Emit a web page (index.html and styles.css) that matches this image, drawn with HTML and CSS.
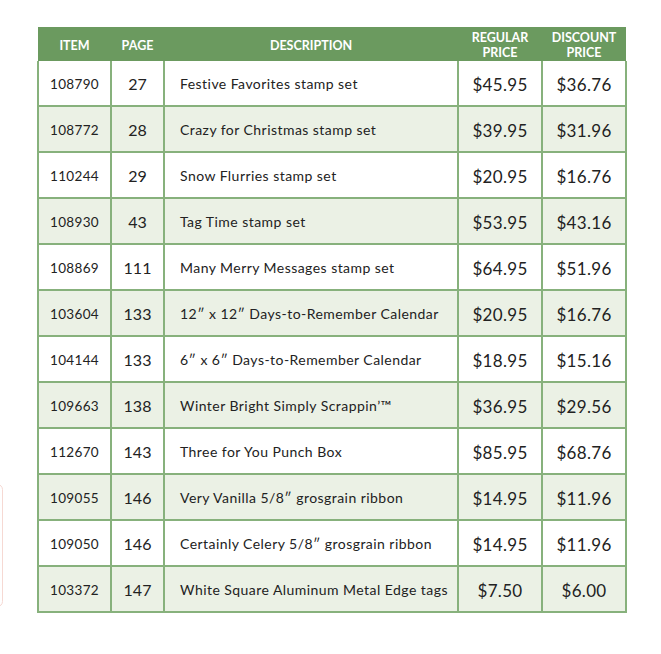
FILE: index.html
```html
<!DOCTYPE html>
<html>
<head>
<meta charset="utf-8">
<link rel="stylesheet" href="styles.css">
</head>
<body>
<div class="edge"></div>
<div class="wrap">
<table class="price-table">
  <colgroup>
    <col class="c-item"><col class="c-page"><col class="c-desc"><col class="c-price"><col class="c-price">
  </colgroup>
  <thead>
    <tr><th>ITEM</th><th>PAGE</th><th>DESCRIPTION</th><th>REGULAR<br>PRICE</th><th>DISCOUNT<br>PRICE</th></tr>
  </thead>
  <tbody>
    <tr><td class="item">108790</td><td class="page">27</td><td class="desc">Festive Favorites stamp set</td><td class="price">$45.95</td><td class="price">$36.76</td></tr>
    <tr class="alt"><td class="item">108772</td><td class="page">28</td><td class="desc">Crazy for Christmas stamp set</td><td class="price">$39.95</td><td class="price">$31.96</td></tr>
    <tr><td class="item">110244</td><td class="page">29</td><td class="desc">Snow Flurries stamp set</td><td class="price">$20.95</td><td class="price">$16.76</td></tr>
    <tr class="alt"><td class="item">108930</td><td class="page">43</td><td class="desc">Tag Time stamp set</td><td class="price">$53.95</td><td class="price">$43.16</td></tr>
    <tr><td class="item">108869</td><td class="page">111</td><td class="desc">Many Merry Messages stamp set</td><td class="price">$64.95</td><td class="price">$51.96</td></tr>
    <tr class="alt"><td class="item">103604</td><td class="page">133</td><td class="desc">12″ x 12″ Days-to-Remember Calendar</td><td class="price">$20.95</td><td class="price">$16.76</td></tr>
    <tr><td class="item">104144</td><td class="page">133</td><td class="desc">6″ x 6″ Days-to-Remember Calendar</td><td class="price">$18.95</td><td class="price">$15.16</td></tr>
    <tr class="alt"><td class="item">109663</td><td class="page">138</td><td class="desc">Winter Bright Simply Scrappin’™</td><td class="price">$36.95</td><td class="price">$29.56</td></tr>
    <tr><td class="item">112670</td><td class="page">143</td><td class="desc">Three for You Punch Box</td><td class="price">$85.95</td><td class="price">$68.76</td></tr>
    <tr class="alt"><td class="item">109055</td><td class="page">146</td><td class="desc">Very Vanilla 5/8″ grosgrain ribbon</td><td class="price">$14.95</td><td class="price">$11.96</td></tr>
    <tr><td class="item">109050</td><td class="page">146</td><td class="desc">Certainly Celery 5/8″ grosgrain ribbon</td><td class="price">$14.95</td><td class="price">$11.96</td></tr>
    <tr class="alt"><td class="item">103372</td><td class="page">147</td><td class="desc">White Square Aluminum Metal Edge tags</td><td class="price">$7.50</td><td class="price">$6.00</td></tr>
  </tbody>
</table>
</div>
</body>
</html>
```
FILE: styles.css
```css
html, body {
  margin: 0;
  padding: 0;
  background: #ffffff;
}
body {
  font-family: Lato, "Noto Sans", sans-serif;
  color: #222;
  position: relative;
  width: 661px;
  height: 654px;
  overflow: hidden;
}
.edge {
  position: absolute;
  left: -8px;
  top: 484px;
  width: 9px;
  height: 121px;
  border: 1px solid #f6d9d3;
  border-radius: 6px;
}
.wrap {
  padding: 27px 0 0 37px;
}
.price-table {
  border-collapse: collapse;
  table-layout: fixed;
  width: 588px;
}
.c-item { width: 73px; }
.c-page { width: 53px; }
.c-desc { width: 294px; }
.c-price { width: 84px; }
.price-table th {
  background: #6b9a5f;
  color: #fff;
  font-weight: 700;
  font-size: 12.5px;
  line-height: 15px;
  height: 32px;
  padding: 2px 0 0;
  text-align: center;
  border: 0;
  vertical-align: middle;
}
.price-table td {
  border: 2px solid #87b17c;
  height: 44px;
  padding: 0;
  vertical-align: middle;
}
.price-table tr:first-child td {
  border-top: 0;
}
.alt td {
  background: #ebf1e5;
}
.price-table td.item {
  text-align: center;
  font-size: 13.5px;
  letter-spacing: 0.3px;
  height: 42px;
  padding-top: 2px;
}
.page {
  text-align: center;
  font-size: 16px;
}
.desc {
  font-size: 14px;
  padding-left: 15px !important;
  letter-spacing: 0.45px;
}
.price-table td.price {
  text-align: center;
  font-size: 17px;
  letter-spacing: 0.3px;
  height: 42px;
  padding-top: 2px;
}
```
